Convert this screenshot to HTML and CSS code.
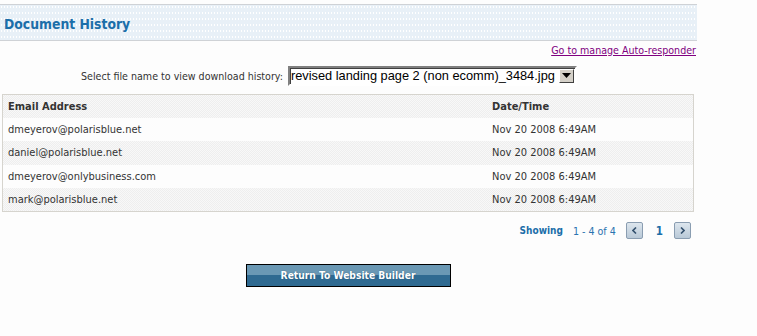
FILE: index.html
```html
<!DOCTYPE html>
<html>
<head>
<meta charset="utf-8">
<link rel="stylesheet" href="styles.css">
</head>
<body>
<div class="page">
  <div class="header"><h1 class="title">Document History</h1></div>
  <div class="linkrow"><a class="link" href="#">Go to manage Auto-responder</a></div>
  <div class="selectrow">
    <span class="label">Select file name to view download history:</span>
    <div class="select">
      <span class="select-text">revised landing page 2 (non ecomm)_3484.jpg</span>
      <span class="select-btn"><svg width="9" height="5" viewBox="0 0 9 5"><path d="M0 0h9L4.5 5z" fill="#000"/></svg></span>
    </div>
  </div>
  <div class="table">
    <div class="row head"><div class="c1">Email Address</div><div class="c2">Date/Time</div></div>
    <div class="row"><div class="c1">dmeyerov@polarisblue.net</div><div class="c2">Nov 20 2008 6:49AM</div></div>
    <div class="row alt"><div class="c1">daniel@polarisblue.net</div><div class="c2">Nov 20 2008 6:49AM</div></div>
    <div class="row"><div class="c1">dmeyerov@onlybusiness.com</div><div class="c2">Nov 20 2008 6:49AM</div></div>
    <div class="row alt"><div class="c1">mark@polarisblue.net</div><div class="c2">Nov 20 2008 6:49AM</div></div>
  </div>
  <div class="pager">
    <span class="showing">Showing</span>
    <span class="range">1 - 4 of 4</span>
    <span class="pbtn"><svg width="5" height="7" viewBox="0 0 5 7"><path d="M4 0.5L1 3.5L4 6.5" stroke="#34516e" stroke-width="1.6" fill="none"/></svg></span>
    <span class="pnum">1</span>
    <span class="pbtn"><svg width="5" height="7" viewBox="0 0 5 7"><path d="M1 0.5L4 3.5L1 6.5" stroke="#34516e" stroke-width="1.6" fill="none"/></svg></span>
  </div>
  <div class="btnrow"><button class="btn">Return To Website Builder</button></div>
</div>
</body>
</html>
```
FILE: styles.css
```css
html, body { margin: 0; padding: 0; background: #fdfdfd; }
body { font-family: "DejaVu Sans Condensed", "DejaVu Sans", sans-serif; font-size: 11px; color: #333; }
.page { width: 697px; padding-top: 4px; }
.header {
  height: 35px;
  border-top: 1px solid #cfd2d6;
  border-bottom: 1px solid #cfd2d6;
  background-color: #e8f0f7;
  background-image: radial-gradient(circle, #ffffff 0.6px, transparent 0.8px);
  background-size: 3px 6px;
  background-position: 0 17px;
  display: flex;
  align-items: center;
}
.title { margin: 0 0 0 4px; font-size: 13.8px; font-weight: bold; color: #1b6ea9; padding-top: 2px; }
.linkrow { display: flex; justify-content: flex-end; padding-top: 3px; height: 16px; }
.link { color: #800080; text-decoration: underline; font-size: 10.6px; margin-right: 1px; }
.selectrow { display: flex; align-items: center; padding-left: 81px; margin-top: 5px; height: 21px; }
.label { font-size: 10.6px; color: #333; }
.select {
  margin-left: 5px;
  width: 285px; height: 16px;
  border: 2px solid; border-color: #808080 #fff #fff #808080;
  box-shadow: inset 1px 1px 0 #404040;
  background: #fff;
  display: flex; align-items: center;
}
.select-text { font-family: "Liberation Sans", Arial, sans-serif; font-size: 12.8px; color: #000; padding-left: 1px; flex: 1; white-space: nowrap; overflow: hidden; }
.select-btn {
  width: 13px; height: 12px; background: #d4d0c8;
  border: 1px solid; border-color: #fff #404040 #404040 #fff;
  display: flex; align-items: center; justify-content: center; margin-right: 1px;
}
.table { margin: 8px 0 0 2px; width: 690px; border: 1px solid #d6d4ce; }
.row { display: flex; height: 23.2px; align-items: center; background: #fdfdfd; }
.row.head, .row.alt {
  background-color: #f3f3f3;
  background-image: repeating-conic-gradient(#eeeeee 0 25%, #f8f8f8 0 50%);
  background-size: 2px 2px;
}
.row.head { font-weight: bold; font-size: 11px; }
.c1 { width: 484px; padding-left: 5px; }
.c2 { flex: 1; }
.pager { display: flex; align-items: center; justify-content: flex-end; margin-top: 10px; padding-right: 6px; height: 18px; color: #1b6ea9; font-size: 10.6px; }
.showing { font-weight: bold; margin-right: 10px; font-size: 10px; }
.range { margin-right: 10px; color: #2a73b0; }
.pnum { font-weight: bold; margin: 0 11px 0 13px; font-size: 11.5px; }
.pbtn {
  width: 15px; height: 15px;
  border: 1px solid #8a9db1; border-radius: 2px;
  background: linear-gradient(#dde6ee, #b9c9d7);
  display: flex; align-items: center; justify-content: center;
}
.btnrow { display: flex; justify-content: center; margin-top: 24px; }
.btn {
  width: 205px; height: 23px;
  margin-right: 1px;
  border: 1px solid #000;
  padding: 0;
  background: linear-gradient(#6a98b4 0, #6a98b4 50%, #2f6a91 50%, #2f6a91 100%);
  color: #fff;
  font-family: "DejaVu Sans Condensed", "DejaVu Sans", sans-serif;
  font-weight: bold; font-size: 10.2px;
  text-shadow: 0 0 1px #1f4f70;
}
```
